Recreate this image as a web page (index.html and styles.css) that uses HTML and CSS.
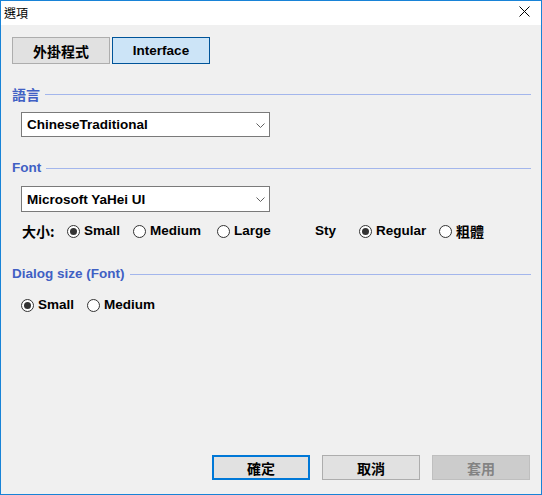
FILE: index.html
```html
<!DOCTYPE html>
<html>
<head>
<meta charset="utf-8">
<link rel="stylesheet" href="styles.css">
</head>
<body>
<div class="window">
  <div class="titlebar">
    <span class="title">選項</span>
    <svg class="close" width="11" height="11" viewBox="0 0 11 11"><path d="M0.5 0.5 L10.5 10.5 M10.5 0.5 L0.5 10.5" stroke="#000" stroke-width="1" fill="none"/></svg>
  </div>
  <div class="content">
    <div class="tabs">
      <div class="tab"><span class="cjk">外掛程式</span></div>
      <div class="tab active">Interface</div>
    </div>

    <div class="header h-lang"><span class="hlabel cjk">語言</span><span class="hline"></span></div>
    <div class="combo c-lang"><span>ChineseTraditional</span><svg width="9" height="5" viewBox="0 0 9 5"><path d="M0.5 0.5 L4.5 4.5 L8.5 0.5" stroke="#606060" stroke-width="1" fill="none"/></svg></div>

    <div class="header h-font"><span class="hlabel">Font</span><span class="hline"></span></div>
    <div class="combo c-font"><span>Microsoft YaHei UI</span><svg width="9" height="5" viewBox="0 0 9 5"><path d="M0.5 0.5 L4.5 4.5 L8.5 0.5" stroke="#606060" stroke-width="1" fill="none"/></svg></div>

    <div class="row r-font">
      <span class="lbl w-size cjk">大小:</span>
      <span class="opt w-small"><span class="radio on"></span><span>Small</span></span>
      <span class="opt w-medium"><span class="radio"></span><span>Medium</span></span>
      <span class="opt w-large"><span class="radio"></span><span>Large</span></span>
      <span class="lbl w-sty">Sty</span>
      <span class="opt w-regular"><span class="radio on"></span><span>Regular</span></span>
      <span class="opt"><span class="radio"></span><span class="cjk">粗體</span></span>
    </div>

    <div class="header h-dlg"><span class="hlabel">Dialog size (Font)</span><span class="hline"></span></div>
    <div class="row r-dlg">
      <span class="opt w-small2"><span class="radio on"></span><span>Small</span></span>
      <span class="opt"><span class="radio"></span><span>Medium</span></span>
    </div>

    <div class="buttons">
      <div class="btn default"><span class="cjk">確定</span></div>
      <div class="btn"><span class="cjk">取消</span></div>
      <div class="btn disabled"><span class="cjk">套用</span></div>
    </div>
  </div>
</div>
</body>
</html>
```

FILE: styles.css
```css
html, body {
  margin: 0;
  padding: 0;
}
body {
  font-family: "Liberation Sans", "Noto Sans CJK TC", sans-serif;
  font-size: 13.5px;
  font-weight: bold;
  color: #000;
}
.cjk {
  font-family: "Noto Sans CJK TC", sans-serif;
  font-size: 14px;
  font-weight: bold;
}
.window {
  width: 542px;
  height: 495px;
  box-sizing: border-box;
  border: 1px solid #1883d7;
  background: #f0f0f0;
  display: flex;
  flex-direction: column;
}
.titlebar {
  height: 24px;
  background: #fff;
  display: flex;
  align-items: center;
  justify-content: space-between;
  padding: 0 11px 0 3px;
}
.title {
  font-family: "Noto Sans CJK TC", sans-serif;
  font-weight: normal;
  font-size: 12px;
  line-height: 14px;
  margin-top: -1px;
}
.close {
  display: block;
  margin-top: -4px;
}
.content {
  flex: 1;
  display: flex;
  flex-direction: column;
  padding: 12px 10px 14px 11px;
}
.tabs {
  display: flex;
  gap: 2px;
}
.tab {
  width: 98px;
  height: 27px;
  box-sizing: border-box;
  border: 1px solid #adadad;
  background: #e1e1e1;
  display: flex;
  align-items: center;
  justify-content: center;
  line-height: 16px;
}
.tab.active {
  border-color: #005499;
  background: #cce4f7;
}
.header {
  display: flex;
  align-items: center;
  height: 16px;
  gap: 5px;
}
.hlabel {
  color: #4060c4;
  line-height: 16px;
}
.hline {
  flex: 1;
  height: 1px;
  background: #a3b6ec;
}
.h-lang { margin-top: 22px; }
.h-font { margin-top: 23px; }
.h-dlg { margin-top: 27px; }
.combo {
  width: 249px;
  height: 25px;
  box-sizing: border-box;
  margin-left: 9px;
  border: 1px solid #7a7a7a;
  background: #fff;
  display: flex;
  align-items: center;
  justify-content: space-between;
  padding: 0 4px 0 5px;
}
.combo svg { display: block; margin-top: 1px; }
.c-lang { margin-top: 10px; }
.c-font { margin-top: 10px; height: 26px; }
.row {
  display: flex;
  align-items: center;
  height: 16px;
}
.r-font { margin-top: 11px; margin-left: 10px; }
.r-dlg { margin-top: 15px; margin-left: 9px; }
.lbl { line-height: 16px; }
.opt {
  display: flex;
  align-items: center;
  gap: 4px;
  line-height: 16px;
}
.w-size { width: 45px; }
.w-small { width: 66px; }
.w-medium { width: 84px; }
.w-large { width: 98px; }
.w-sty { width: 44px; }
.w-regular { width: 80px; }
.w-small2 { width: 66px; }
.radio {
  width: 13px;
  height: 13px;
  box-sizing: border-box;
  border: 1px solid #333;
  border-radius: 50%;
  background: #fff;
  position: relative;
  flex: none;
}
.radio.on::after {
  content: "";
  position: absolute;
  left: 2px;
  top: 2px;
  width: 7px;
  height: 7px;
  border-radius: 50%;
  background: #333;
}
.buttons {
  margin-top: auto;
  margin-right: 1px;
  display: flex;
  justify-content: flex-end;
  gap: 12px;
}
.btn {
  width: 98px;
  height: 25px;
  box-sizing: border-box;
  border: 1px solid #adadad;
  background: #e1e1e1;
  display: flex;
  align-items: center;
  justify-content: center;
  line-height: 16px;
}
.btn.default {
  border: 2px solid #0078d7;
}
.btn.disabled {
  background: #cccccc;
  border-color: #bfbfbf;
  color: #838383;
}
```
